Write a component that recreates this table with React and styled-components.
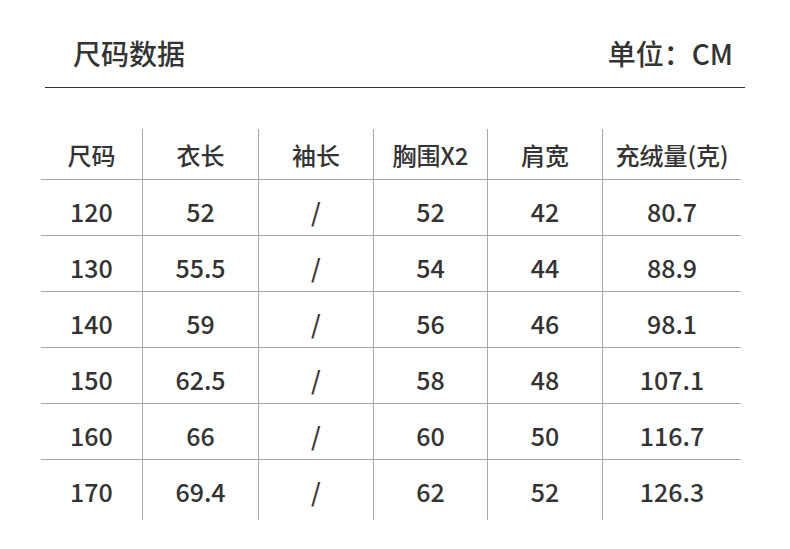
import React from "react";
import styled, { createGlobalStyle } from "styled-components";

const GlobalStyle = createGlobalStyle`
  body {
    margin: 0;
    background: #ffffff;
    font-family: "Noto Sans CJK SC", "Noto Sans", sans-serif;
    color: #333;
  }
`;

const StyledPage = styled.div`
  width: 790px;
  height: 549px;
  background: #fff;
  overflow: hidden;
`;

const StyledHeader = styled.div`
  margin: 0 45px;
  padding: 34px 12px 14px 28px;
  display: flex;
  justify-content: space-between;
  align-items: center;
  border-bottom: 1px solid #333;
`;

const StyledTitle = styled.div`
  font-size: 28px;
  font-weight: 500;
  line-height: 39px;
  color: #333;
`;

const StyledTable = styled.div`
  margin: 41px 0 0 41px;
  width: 700px;
  display: grid;
  grid-template-columns: 101px 116px 115px 114px 115px 139px;
`;

const StyledCell = styled.div`
  box-sizing: border-box;
  height: ${(p) => (p.$head ? "51px" : p.$last ? "60px" : "56px")};
  padding-top: ${(p) => (p.$head ? "0" : "7px")};
  line-height: ${(p) => (p.$head ? "51px" : "48px")};
  text-align: center;
  font-size: ${(p) => (p.$head ? "24px" : "25px")};
  font-weight: 500;
  color: #333;
  white-space: nowrap;
  border-left: ${(p) => (p.$first ? "none" : "1px solid #a8a8a8")};
  border-bottom: ${(p) => (p.$last ? "none" : "1px solid #a8a8a8")};
`;

const heads = ["尺码", "衣长", "袖长", "胸围X2", "肩宽", "充绒量(克)"];
const rows = [
  ["120", "52", "/", "52", "42", "80.7"],
  ["130", "55.5", "/", "54", "44", "88.9"],
  ["140", "59", "/", "56", "46", "98.1"],
  ["150", "62.5", "/", "58", "48", "107.1"],
  ["160", "66", "/", "60", "50", "116.7"],
  ["170", "69.4", "/", "62", "52", "126.3"],
];

const App = () => {
  return (
    <>
      <GlobalStyle />
      <StyledPage>
        <StyledHeader>
          <StyledTitle>尺码数据</StyledTitle>
          <StyledTitle>单位：CM</StyledTitle>
        </StyledHeader>
        <StyledTable>
          {heads.map((h, i) => (
            <StyledCell key={h} $head $first={i === 0}>
              {h}
            </StyledCell>
          ))}
          {rows.map((row, r) =>
            row.map((v, i) => (
              <StyledCell
                key={r + "-" + i}
                $first={i === 0}
                $last={r === rows.length - 1}
              >
                {v}
              </StyledCell>
            ))
          )}
        </StyledTable>
      </StyledPage>
    </>
  );
};

export default App;
